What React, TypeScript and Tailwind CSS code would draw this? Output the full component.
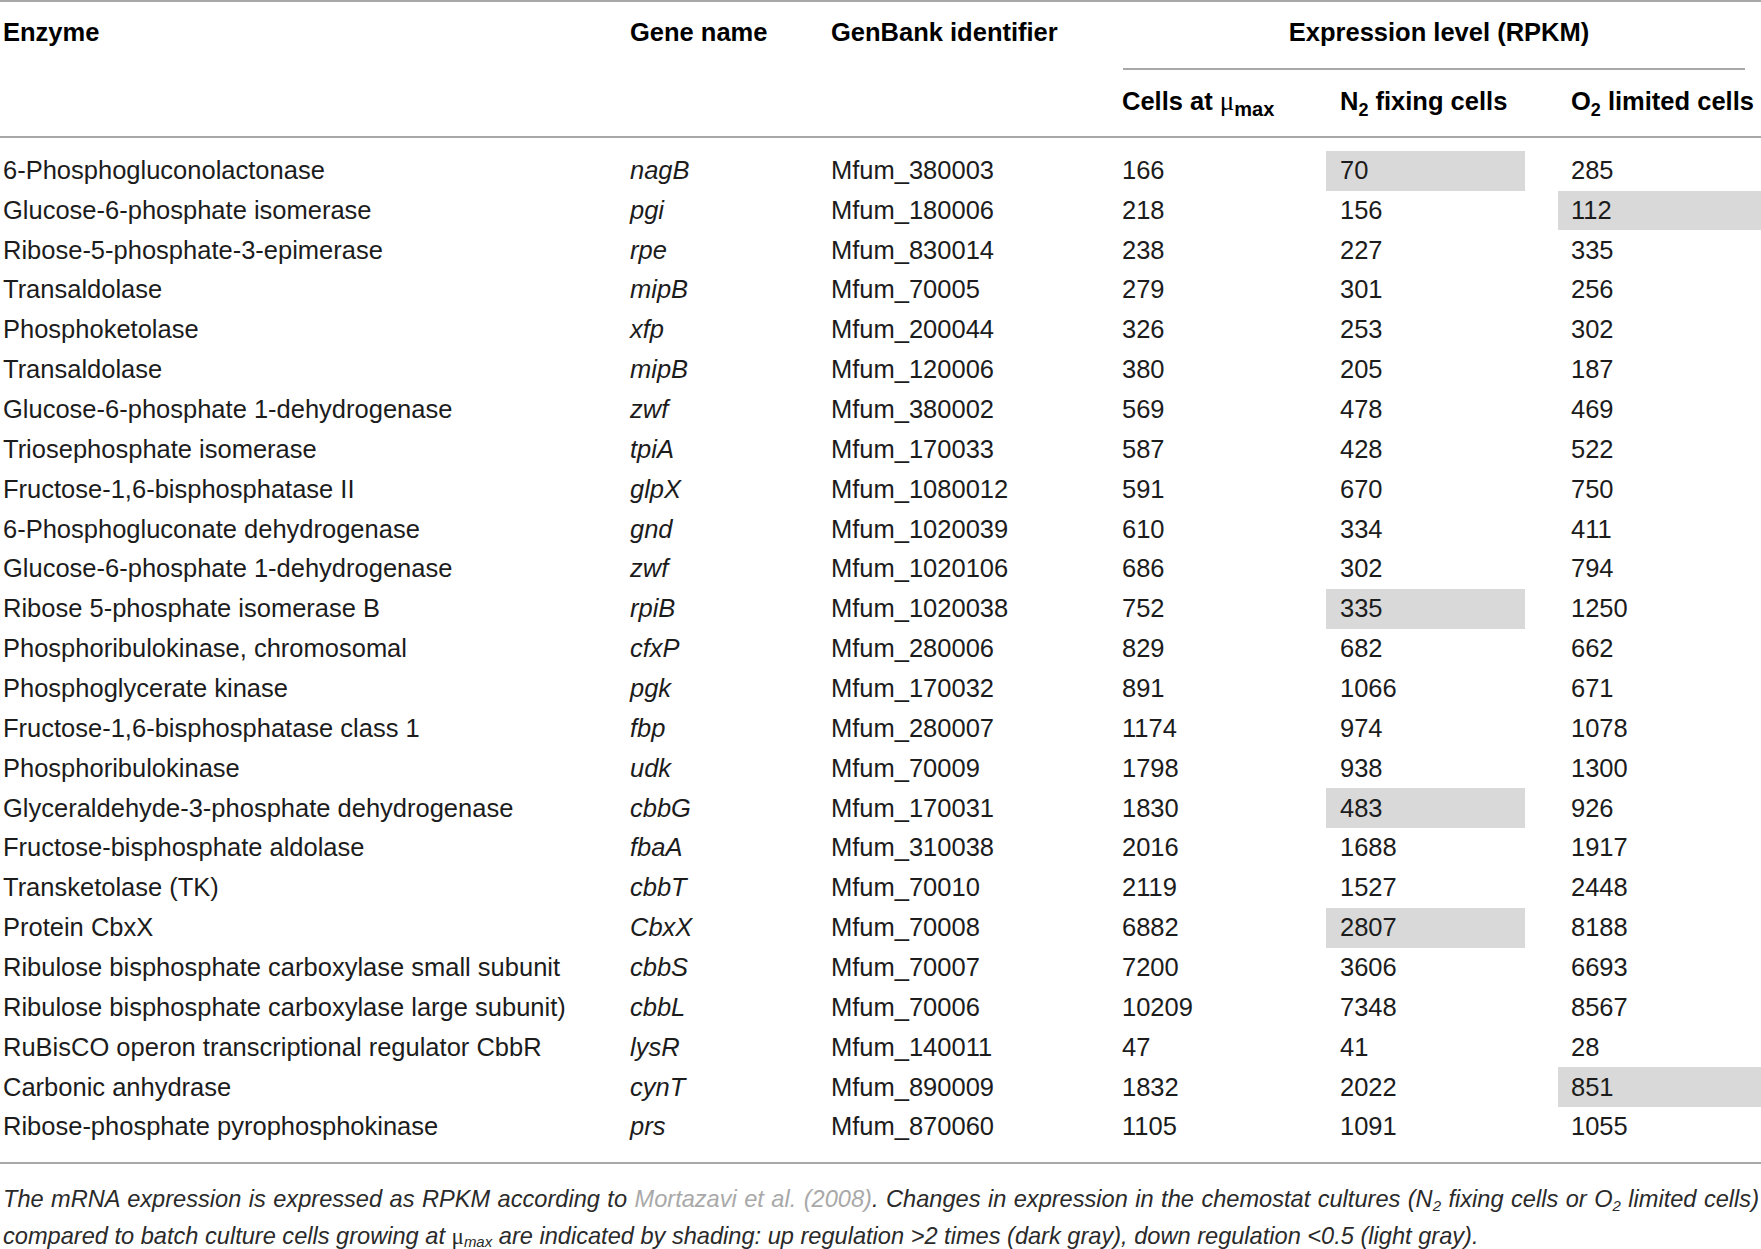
import React from "react";

type Row = [string, string, string, string, string, string, number];

const rows: Row[] = [
  ["6-Phosphogluconolactonase", "nagB", "Mfum_380003", "166", "70", "285", 1],
  ["Glucose-6-phosphate isomerase", "pgi", "Mfum_180006", "218", "156", "112", 2],
  ["Ribose-5-phosphate-3-epimerase", "rpe", "Mfum_830014", "238", "227", "335", 0],
  ["Transaldolase", "mipB", "Mfum_70005", "279", "301", "256", 0],
  ["Phosphoketolase", "xfp", "Mfum_200044", "326", "253", "302", 0],
  ["Transaldolase", "mipB", "Mfum_120006", "380", "205", "187", 0],
  ["Glucose-6-phosphate 1-dehydrogenase", "zwf", "Mfum_380002", "569", "478", "469", 0],
  ["Triosephosphate isomerase", "tpiA", "Mfum_170033", "587", "428", "522", 0],
  ["Fructose-1,6-bisphosphatase II", "glpX", "Mfum_1080012", "591", "670", "750", 0],
  ["6-Phosphogluconate dehydrogenase", "gnd", "Mfum_1020039", "610", "334", "411", 0],
  ["Glucose-6-phosphate 1-dehydrogenase", "zwf", "Mfum_1020106", "686", "302", "794", 0],
  ["Ribose 5-phosphate isomerase B", "rpiB", "Mfum_1020038", "752", "335", "1250", 1],
  ["Phosphoribulokinase, chromosomal", "cfxP", "Mfum_280006", "829", "682", "662", 0],
  ["Phosphoglycerate kinase", "pgk", "Mfum_170032", "891", "1066", "671", 0],
  ["Fructose-1,6-bisphosphatase class 1", "fbp", "Mfum_280007", "1174", "974", "1078", 0],
  ["Phosphoribulokinase", "udk", "Mfum_70009", "1798", "938", "1300", 0],
  ["Glyceraldehyde-3-phosphate dehydrogenase", "cbbG", "Mfum_170031", "1830", "483", "926", 1],
  ["Fructose-bisphosphate aldolase", "fbaA", "Mfum_310038", "2016", "1688", "1917", 0],
  ["Transketolase (TK)", "cbbT", "Mfum_70010", "2119", "1527", "2448", 0],
  ["Protein CbxX", "CbxX", "Mfum_70008", "6882", "2807", "8188", 1],
  ["Ribulose bisphosphate carboxylase small subunit", "cbbS", "Mfum_70007", "7200", "3606", "6693", 0],
  ["Ribulose bisphosphate carboxylase large subunit)", "cbbL", "Mfum_70006", "10209", "7348", "8567", 0],
  ["RuBisCO operon transcriptional regulator CbbR", "lysR", "Mfum_140011", "47", "41", "28", 0],
  ["Carbonic anhydrase", "cynT", "Mfum_890009", "1832", "2022", "851", 2],
  ["Ribose-phosphate pyrophosphokinase", "prs", "Mfum_870060", "1105", "1091", "1055", 0],
];

const grid = "grid grid-cols-[617px_201px_291px_217px_232px_203px]";

export default function App() {
  return (
    <div
      className="w-[1761px] h-[1249px] bg-white text-[#1c1c1c] overflow-hidden"
      style={{ fontFamily: '"Liberation Sans", Arial, sans-serif' }}
    >
      <div className="h-[2px] bg-[#a8a8a8]" />
      {/* Header */}
      <div className="font-bold text-[25.5px] text-black">
        <div className={`${grid} h-[61px] items-center`}>
          <div className="pl-[3px]">Enzyme</div>
          <div className="pl-[13px]">Gene name</div>
          <div className="pl-[13px]">GenBank identifier</div>
          <div className="col-span-3 text-center pl-[8px]">Expression level (RPKM)</div>
        </div>
        <div className={`${grid} h-[8.5px]`}>
          <div className="col-start-4 col-span-3 pt-[4.5px] pl-[14px] pr-[16px]">
            <div className="h-[2px] bg-[#a8a8a8]" />
          </div>
        </div>
        <div className={`${grid} h-[59px] items-center`}>
          <div className="col-start-4 pl-[13px] whitespace-nowrap">
            Cells at{" "}
            <span className="font-normal text-[27px]" style={{ fontFamily: '"Liberation Serif", serif' }}>
              μ
            </span>
            <span className="text-[20px] relative top-[6px]">max</span>
          </div>
          <div className="pl-[14px] whitespace-nowrap">
            N<span className="text-[18px] relative top-[6px]">2</span> fixing cells
          </div>
          <div className="pl-[13px] whitespace-nowrap">
            O<span className="text-[18px] relative top-[6px]">2</span> limited cells
          </div>
        </div>
        <div className="h-[5.5px]" />
        <div className="h-[2px] bg-[#a8a8a8]" />
      </div>

      {/* Body */}
      <div className="pt-[12.7px] text-[25.5px] leading-none">
        {rows.map((r, i) => (
          <div key={i} className={`${grid} h-[39.87px]`}>
            <div className="pl-[3px] flex items-center whitespace-nowrap">{r[0]}</div>
            <div className="pl-[13px] flex items-center italic">{r[1]}</div>
            <div className="pl-[13px] flex items-center">{r[2]}</div>
            <div className="pl-[13px] flex items-center">{r[3]}</div>
            <div className="flex">
              <div
                className={`w-[199px] pl-[14px] flex items-center ${r[6] === 1 ? "bg-[#d9d9d9]" : ""}`}
              >
                {r[4]}
              </div>
            </div>
            <div className={`pl-[13px] flex items-center ${r[6] === 2 ? "bg-[#d9d9d9]" : ""}`}>
              {r[5]}
            </div>
          </div>
        ))}
      </div>

      <div className="h-[14.5px]" />
      <div className="h-[2px] bg-[#a8a8a8]" />

      {/* Footnote */}
      <div className="pt-[16px] pl-[3px] pr-[2px] italic text-[23.6px] text-[#2a2a2a]">
        <div className="h-[38.6px] leading-[38.6px] text-justify [text-align-last:justify] overflow-hidden">
          The mRNA expression is expressed as RPKM according to{" "}
          <span className="text-[#a9a9a9]">Mortazavi et al. (2008)</span>. Changes in expression in the
          chemostat cultures (N<span className="text-[15px] relative top-[4px]">2</span> fixing cells or O
          <span className="text-[15px] relative top-[4px]">2</span> limited cells)
        </div>
        <div className="mt-[5.3px] h-[24px] leading-[24px] whitespace-nowrap">
          compared to batch culture cells growing at{" "}
          <span className="not-italic text-[23px]" style={{ fontFamily: '"Liberation Serif", serif' }}>
            μ
          </span>
          <span className="text-[15px] relative top-[3px]">max</span> are indicated by shading: up regulation &gt;2
          times (dark gray), down regulation &lt;0.5 (light gray).
        </div>
      </div>
    </div>
  );
}
